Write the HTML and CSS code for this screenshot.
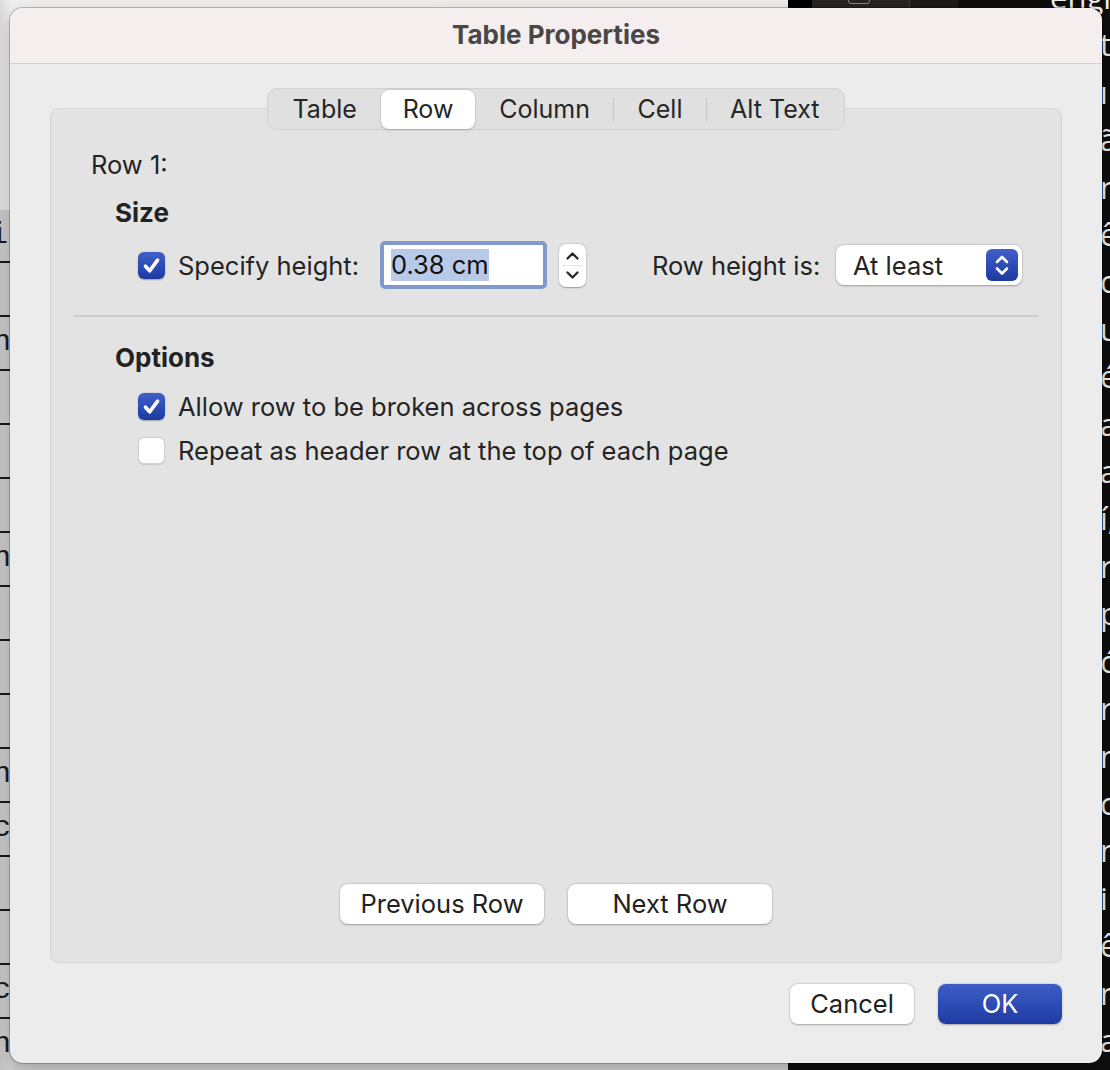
FILE: index.html
```html
<!DOCTYPE html>
<html lang="en">
<head>
<meta charset="utf-8">
<title>Table Properties</title>
<link rel="stylesheet" href="styles.css">
</head>
<body>
<div class="desktop">
  <div class="doc">
    <div class="doc-top"></div>
    <div class="doc-page">
      <div class="doc-row"><span class="frag frag-i">i</span></div>
      <div class="doc-row"></div>
      <div class="doc-row"><span class="frag">n</span></div>
      <div class="doc-row"></div>
      <div class="doc-row"></div>
      <div class="doc-row"></div>
      <div class="doc-row"><span class="frag">n</span></div>
      <div class="doc-row"></div>
      <div class="doc-row"></div>
      <div class="doc-row"></div>
      <div class="doc-row"><span class="frag">n</span></div>
      <div class="doc-row"><span class="frag">c</span></div>
      <div class="doc-row"></div>
      <div class="doc-row"></div>
      <div class="doc-row"><span class="frag">c</span></div>
      <div class="doc-row"><span class="frag">n</span></div>
    </div>
  </div>
  <div class="dark">
    <div class="dark-top">
      <span class="dt-black"></span>
      <span class="dt-tool"><span class="dt-icon"></span></span>
      <span class="dt-tool2"></span>
      <span class="dt-rest"></span>
    </div>
    <div class="dark-text">
      <div class="dl first">engl</div>
      <div class="dl">t</div>
      <div class="dl">ı</div>
      <div class="dl">ã</div>
      <div class="dl">n</div>
      <div class="dl">ê</div>
      <div class="dl">o</div>
      <div class="dl">u</div>
      <div class="dl">é</div>
      <div class="dl">a</div>
      <div class="dl">ar</div>
      <div class="dl">í,</div>
      <div class="dl">r</div>
      <div class="dl">p</div>
      <div class="dl">ó</div>
      <div class="dl">r</div>
      <div class="dl">n</div>
      <div class="dl">c</div>
      <div class="dl">n</div>
      <div class="dl">i</div>
      <div class="dl">ê</div>
      <div class="dl">n</div>
      <div class="dl">a</div>
    </div>
  </div>
</div>

<div class="dialog">
  <div class="titlebar">Table Properties</div>
  <div class="content">
    <div class="tabs-wrap">
      <div class="tabs">
        <span class="tab">Table</span>
        <span class="tab-sep hidden"></span>
        <span class="tab selected">Row</span>
        <span class="tab-sep hidden"></span>
        <span class="tab">Column</span>
        <span class="tab-sep"></span>
        <span class="tab">Cell</span>
        <span class="tab-sep"></span>
        <span class="tab">Alt Text</span>
      </div>
    </div>

    <div class="panel">
      <div class="line">Row 1:</div>
      <div class="line heading heading-size">Size</div>

      <div class="size-row">
        <span class="checkbox checked">
          <svg viewBox="0 0 27 27" width="27" height="27"><path d="M7.5 14.2 L11.6 18.8 L19.6 8.2" fill="none" stroke="#fff" stroke-width="3.6" stroke-linecap="round" stroke-linejoin="round"/></svg>
        </span>
        <span class="size-label">Specify height:</span>
        <span class="field"><span class="sel">0.38 cm</span></span>
        <span class="stepper">
          <svg viewBox="0 0 27 43" width="27" height="43">
            <path d="M8.5 14.5 L13.5 9.5 L18.5 14.5" fill="none" stroke="#2a2a2a" stroke-width="2.4" stroke-linecap="round" stroke-linejoin="round"/>
            <line x1="3" y1="21.5" x2="24" y2="21.5" stroke="#e4e4e4" stroke-width="1"/>
            <path d="M8.5 28.5 L13.5 33.5 L18.5 28.5" fill="none" stroke="#2a2a2a" stroke-width="2.4" stroke-linecap="round" stroke-linejoin="round"/>
          </svg>
        </span>
        <span class="rh-label">Row height is:</span>
        <span class="popup">
          <span class="popup-text">At least</span>
          <span class="popup-arrows">
            <svg viewBox="0 0 32 32" width="32" height="32">
              <path d="M11 13 L16 8 L21 13" fill="none" stroke="#fff" stroke-width="2.6" stroke-linecap="round" stroke-linejoin="round"/>
              <path d="M11 19.5 L16 24.5 L21 19.5" fill="none" stroke="#fff" stroke-width="2.6" stroke-linecap="round" stroke-linejoin="round"/>
            </svg>
          </span>
        </span>
      </div>

      <div class="separator"></div>

      <div class="line heading heading-options">Options</div>

      <div class="opt-row opt-first">
        <span class="checkbox checked">
          <svg viewBox="0 0 27 27" width="27" height="27"><path d="M7.5 14.2 L11.6 18.8 L19.6 8.2" fill="none" stroke="#fff" stroke-width="3.6" stroke-linecap="round" stroke-linejoin="round"/></svg>
        </span>
        <span class="opt-label">Allow row to be broken across pages</span>
      </div>
      <div class="opt-row opt-second">
        <span class="checkbox"></span>
        <span class="opt-label">Repeat as header row at the top of each page</span>
      </div>

      <div class="spacer"></div>

      <div class="nav-buttons">
        <button class="btn btn-nav">Previous Row</button>
        <button class="btn btn-nav">Next Row</button>
      </div>
    </div>

    <div class="footer">
      <button class="btn btn-foot">Cancel</button>
      <button class="btn btn-foot btn-primary">OK</button>
    </div>
  </div>
</div>
</body>
</html>
```

FILE: styles.css
```css
* { box-sizing: border-box; margin: 0; padding: 0; }

html, body {
  width: 1110px;
  height: 1070px;
  overflow: hidden;
}

body {
  position: relative;
  background: #0e0e0e;
  font-family: Inter, "Noto Sans", "Liberation Sans", sans-serif;
  color: #242424;
}

/* ---------- desktop behind the dialog ---------- */
.desktop {
  display: grid;
  grid-template-columns: 788px 1fr;
  height: 1070px;
}

.doc {
  display: grid;
  grid-template-rows: 210px 1fr;
  background: #ececec;
}

.doc-top {
  background: linear-gradient(to right, #dcdcdc 0, #f1f1f1 12px, #eeeeee 100%);
}

.doc-page {
  background: linear-gradient(to right, #c4c4c4 0, #d2d2d2 10px, #d2d2d2 100%);
  display: flex;
  flex-direction: column;
  overflow: hidden;
}

.doc-row {
  flex: none;
  height: 54px;
  border-bottom: 2px solid #1a1a1a;
  font-family: "Liberation Mono", "DejaVu Sans Mono", monospace;
  font-size: 30px;
  line-height: 50px;
  color: #1a1a1a;
}
.doc-row:first-child { height: 53px; }

.frag {
  display: inline-block;
  margin-left: -7px;
}
.frag-i { margin-left: -10px; }

.dark {
  display: grid;
  grid-template-rows: 8px 1fr;
  background: #0e0e0e;
  overflow: hidden;
}

.dark-top {
  display: flex;
  height: 8px;
}
.dt-black { width: 24px; background: #000; }
.dt-tool {
  width: 98px;
  background: #242424;
  border-right: 1px solid #3a3a3a;
  position: relative;
}
.dt-icon {
  position: absolute;
  left: 36px;
  top: -6px;
  width: 22px;
  height: 10px;
  border: 1.5px solid #8a8a8a;
  border-radius: 3px;
}
.dt-tool2 { width: 48px; background: #1c1c1c; }
.dt-rest { flex: 1; background: #0e0e0e; }

.dark-text {
  margin-top: -34px;
  color: #f0f0f0;
  font-family: "Open Sans", "Noto Sans", sans-serif;
  font-size: 31px;
  line-height: 47.4px;
  white-space: nowrap;
}
.dl { padding-left: 312px; }
.dl.first { padding-left: 262px; }

/* ---------- dialog ---------- */
.dialog {
  position: absolute;
  left: 10px;
  top: 8px;
  width: 1092px;
  height: 1055px;
  background: #ececec;
  border-radius: 13px;
  box-shadow: 0 0 0 1px rgba(0, 0, 0, 0.22), 0 6px 18px rgba(0, 0, 0, 0.25);
  overflow: hidden;
  display: flex;
  flex-direction: column;
}

.titlebar {
  flex: none;
  height: 56px;
  background: #f4eeee;
  border-bottom: 1px solid #d2d0d0;
  text-align: center;
  font-weight: 700;
  font-size: 26px;
  line-height: 54px;
  color: #484646;
}

.content {
  flex: 1;
  display: flex;
  flex-direction: column;
  padding: 24px 40px 39px;
}

/* tabs */
.tabs-wrap {
  display: flex;
  justify-content: center;
  position: relative;
  z-index: 2;
}

.tabs {
  display: flex;
  align-items: center;
  height: 42px;
  padding: 0 1px;
  background: #e0e0e0;
  border: 1px solid #d2d2d2;
  border-radius: 10px;
  font-size: 25px;
}

.tab {
  height: 39px;
  line-height: 39px;
  padding: 0 23.3px;
  color: #262626;
  border-radius: 8px;
}

.tab.selected {
  background: #ffffff;
  box-shadow: 0 0.5px 2px rgba(0, 0, 0, 0.22), 0 0 0 0.5px rgba(0, 0, 0, 0.06);
  padding: 0 21.5px;
}

.tab-sep {
  width: 1px;
  height: 24px;
  background: #c9c9c9;
}
.tab-sep.hidden { background: transparent; }

/* panel */
.panel {
  flex: none;
  height: 855px;
  margin-top: -22px;
  position: relative;
  z-index: 1;
  background: #e3e3e3;
  border: 1px solid #d7d7d7;
  border-radius: 8px;
  padding: 41px 40px 38px;
  display: flex;
  flex-direction: column;
  font-size: 25.5px;
}

.line {
  height: 30px;
  line-height: 30px;
}

.heading {
  font-weight: 700;
  font-size: 26px;
  margin-left: 24px;
  color: #222;
}
.heading-size { margin-top: 18px; }
.heading-options { margin-top: 26px; }

.size-row {
  display: flex;
  align-items: center;
  height: 48px;
  margin-top: 13px;
  padding-left: 47px;
}

.checkbox {
  flex: none;
  width: 27px;
  height: 27px;
  border-radius: 6px;
  background: #ffffff;
  border: 1px solid #cfcfcf;
  box-shadow: 0 0.5px 1px rgba(0, 0, 0, 0.12);
  display: inline-flex;
}
.checkbox.checked {
  border: none;
  background: linear-gradient(to bottom, #3f5fca 0%, #1d3aa0 100%);
  box-shadow: 0 0.5px 1.5px rgba(0, 0, 0, 0.3);
}

.size-label {
  margin-left: 13px;
  width: 202px;
  flex: none;
}

.field {
  flex: none;
  width: 167px;
  height: 48px;
  border: 4px solid #8098ca;
  border-radius: 5px;
  background: #ffffff;
  padding-left: 7px;
  display: flex;
  align-items: center;
  color: #111;
}
.sel {
  background: #b9cae8;
  line-height: 32px;
  height: 32px;
}

.stepper {
  flex: none;
  margin-left: 12px;
  width: 27px;
  height: 43px;
  border-radius: 7px;
  background: #ffffff;
  box-shadow: 0 0.5px 1.5px rgba(0, 0, 0, 0.3), 0 0 0 0.5px rgba(0, 0, 0, 0.06);
  display: inline-flex;
}

.rh-label {
  flex: none;
  margin-left: 66px;
  width: 184px;
}

.popup {
  flex: none;
  width: 186px;
  height: 40px;
  border-radius: 8px;
  background: #ffffff;
  box-shadow: 0 0.5px 2px rgba(0, 0, 0, 0.3), 0 0 0 0.5px rgba(0, 0, 0, 0.05);
  display: flex;
  align-items: center;
  justify-content: space-between;
  padding: 0 4px 0 17px;
}
.popup-arrows {
  width: 32px;
  height: 32px;
  border-radius: 6px;
  background: linear-gradient(to bottom, #3f5fca 0%, #1d3aa0 100%);
  display: inline-flex;
}

.separator {
  height: 2px;
  background: #cdcdcd;
  margin: 26px -17px 0;
}

.opt-row {
  display: flex;
  align-items: center;
  height: 30px;
  padding-left: 47px;
}
.opt-first { margin-top: 18px; }
.opt-second { margin-top: 14px; }
.opt-label { margin-left: 13px; }

.spacer { flex: 1; }

.nav-buttons {
  display: flex;
  justify-content: center;
  gap: 24px;
}

.btn {
  font-family: inherit;
  font-size: 25.5px;
  color: #222;
  background: #ffffff;
  border: none;
  border-radius: 8px;
  box-shadow: 0 0.5px 2px rgba(0, 0, 0, 0.3), 0 0 0 0.5px rgba(0, 0, 0, 0.05);
  height: 40px;
  line-height: 40px;
  text-align: center;
}

.btn-nav { width: 204px; }

.footer {
  display: flex;
  justify-content: flex-end;
  gap: 24px;
  margin-top: 21px;
}

.btn-foot { width: 124px; }

.btn-primary {
  color: #ffffff;
  background: linear-gradient(to bottom, #3d5ec7 0%, #1e3ba1 100%);
  box-shadow: 0 0.5px 2px rgba(0, 0, 0, 0.3);
}
```
